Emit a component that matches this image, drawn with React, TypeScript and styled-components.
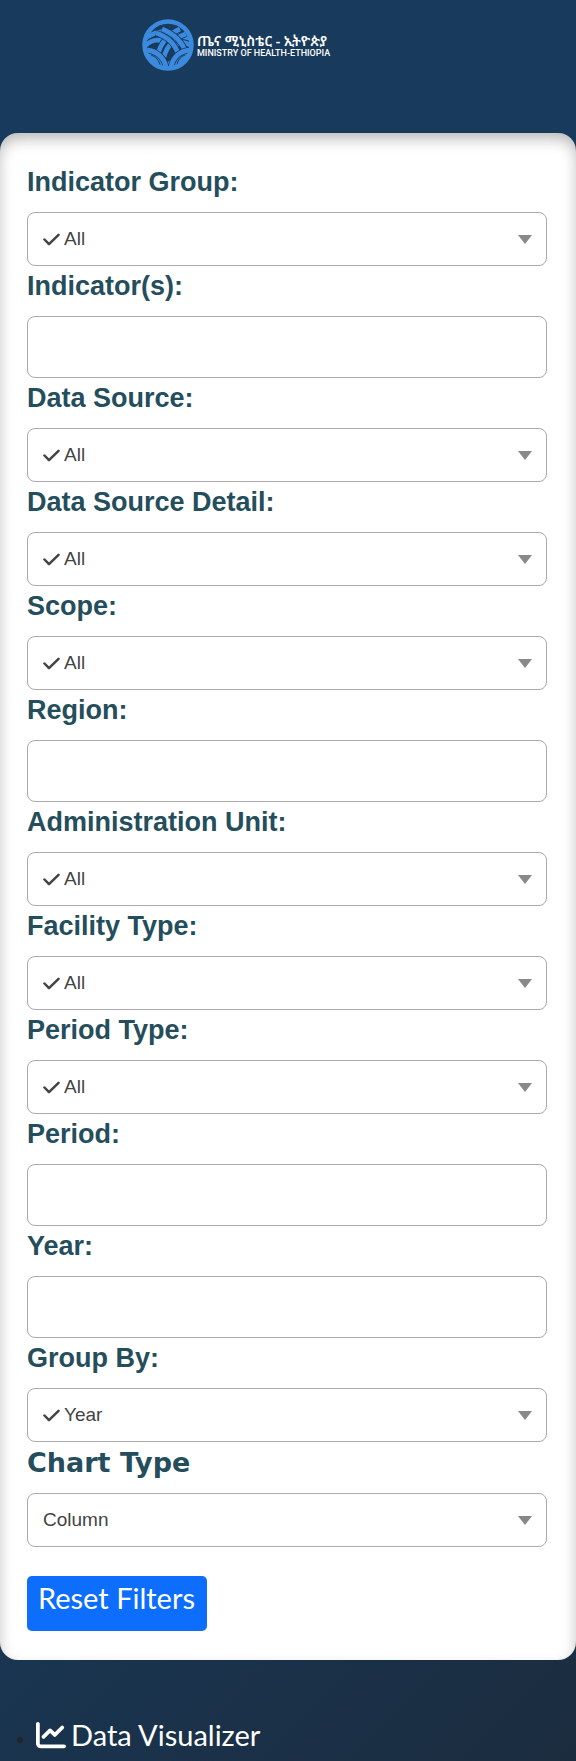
import React, { useId } from 'react';
import styled, { createGlobalStyle, css } from 'styled-components';
import { FaChartLine } from 'react-icons/fa6';

const GlobalStyle = createGlobalStyle`
  *, *::before, *::after { box-sizing: border-box; }
  body {
    margin: 0;
    min-height: 100vh;
    background: linear-gradient(135deg, #183a5c 0%, #183a5b 55%, #1b2c3e 100%);
    font-family: Lato, "Liberation Sans", sans-serif;
  }
`;

const Header = styled.header`
  display: flex;
  height: 133px;
  padding: 19px 0 0 142px;
  align-items: flex-start;
`;

const Brand = styled.a`
  display: flex;
  align-items: center;
  gap: 3px;
  color: #fff;
  text-decoration: none;
`;

const Emblem = styled.svg`
  width: 52px;
  height: 52px;
`;

const BrandText = styled.span`
  display: flex;
  flex-direction: column;
  white-space: nowrap;
`;

const BrandAmharic = styled.span`
  font: 600 14px/16px "Noto Sans Ethiopic", "Noto Sans", sans-serif;
`;

const BrandEnglish = styled.span`
  font: 500 9px/8px Roboto, "Liberation Sans", sans-serif;
`;

const Panel = styled.form`
  display: flex;
  flex-direction: column;
  align-items: stretch;
  padding: 29px 29px 29px 27px;
  background: #fff;
  border-radius: 18px;
  box-shadow: inset 0 7px 15px -2px rgba(0, 0, 0, 0.3);
`;

const Label = styled.label<{ $heavy?: boolean }>`
  display: block;
  padding-bottom: 10px;
  color: #254e5c;
  font: 700 27px/40px "Liberation Sans", Arial, sans-serif;
  ${({ $heavy }) => $heavy && css`
    padding-bottom: 9px;
    font: 900 27px/42px "Arial Black", "DejaVu Sans", sans-serif;
  `}
`;

const box = css`
  width: 100%;
  border: 1px solid #aaa;
  border-radius: 8px;
  background: #fff;
  color: #444;
  font: 400 19px/24px "Liberation Sans", Arial, sans-serif;
`;

const SelectWrap = styled.div`
  display: grid;
  align-items: center;
  color: #444;
  > * { grid-area: 1 / 1; }
  > svg { pointer-events: none; }
`;

const Select = styled.select<{ $checked: boolean }>`
  ${box}
  height: 54px;
  padding: 0 40px 0 ${({ $checked }) => ($checked ? 36 : 15)}px;
  appearance: none;
`;

const Check = styled.svg`
  width: 17px;
  height: 13px;
  margin-left: 16px;
  fill: none;
  stroke: currentColor;
  stroke-width: 2.5;
  stroke-linecap: round;
  stroke-linejoin: round;
`;

const Arrow = styled.svg`
  width: 14px;
  height: 9px;
  margin-right: 15px;
  justify-self: end;
  fill: #888;
`;

const TextBox = styled.input`
  ${box}
  display: block;
  height: 62px;
  padding: 0 16px;
`;

const ResetButton = styled.button`
  align-self: flex-start;
  height: 55px;
  margin-top: 29px;
  padding: 0 12px 11px 11px;
  border: 0;
  border-radius: 5px;
  background: #0d6efd;
  color: #fff;
  font: 400 29px/44px Lato, sans-serif;
`;

const Views = styled.ul`
  margin: 0;
  padding: 53px 0 0 36px;
  color: #212529;
  font-size: 19px;
  line-height: 44px;
`;

const ViewLink = styled.a`
  color: #fff;
  font-size: 29px;
  text-decoration: none;
  > svg { width: 30px; height: 30px; margin-right: 5px; vertical-align: -4px; }
`;

type FieldSpec = { label: string; value?: string; checked?: boolean; heavy?: boolean };

const fields: FieldSpec[] = [
  { label: 'Indicator Group:', value: 'All', checked: true },
  { label: 'Indicator(s):' },
  { label: 'Data Source:', value: 'All', checked: true },
  { label: 'Data Source Detail:', value: 'All', checked: true },
  { label: 'Scope:', value: 'All', checked: true },
  { label: 'Region:' },
  { label: 'Administration Unit:', value: 'All', checked: true },
  { label: 'Facility Type:', value: 'All', checked: true },
  { label: 'Period Type:', value: 'All', checked: true },
  { label: 'Period:' },
  { label: 'Year:' },
  { label: 'Group By:', value: 'Year', checked: true },
  { label: 'Chart Type', value: 'Column', heavy: true },
];

function Field({ label, value, checked = false, heavy }: FieldSpec) {
  const id = useId();
  return (
    <div>
      <Label htmlFor={id} $heavy={heavy}>{label}</Label>
      {value ? (
        <SelectWrap>
          <Select id={id} $checked={checked} defaultValue={value}>
            <option>{value}</option>
          </Select>
          {checked && <Check viewBox="0 0 17 13" aria-hidden><path d="M1.5 6.5l4.5 4.7L15.5 1.8" /></Check>}
          <Arrow viewBox="0 0 14 9" aria-hidden><path d="M0 0h14L7 9z" /></Arrow>
        </SelectWrap>
      ) : (
        <TextBox id={id} type="text" />
      )}
    </div>
  );
}

const bands = [
  'M4 19C14 12 24 11 34 15S44 20 49 20',
  'M3 27C9 21 14 20 20 22',
  'M34 26C39 22 44 23 50 27',
  'M38 10C28 14 18 24 16 36',
  'M44 15C34 18 25 26 22 38',
  'M14 14C24 17 33 24 37 37',
  'M20 10C32 15 40 22 44 34',
  'M5 31C14 32 22 38 24 48',
  'M48 31C38 32 31 38 29 48',
];

function Logo() {
  return (
    <Emblem viewBox="0 0 52 52" aria-hidden>
      <circle cx="26" cy="26" r="23.5" fill="#183a5b" />
      <path d="M4 32C14 33 20 37 26 43C32 37 38 33 48 32C46 43 37 50 26 50S6 43 4 32z" fill="#3b8ade" />
      <g fill="none">
        {bands.map((d) => (
          <g key={d}>
            <path d={d} stroke="#183a5b" strokeWidth="6.4" />
            <path d={d} stroke="#3b8ade" strokeWidth="4.8" />
          </g>
        ))}
        <path d="M9 36c5 2 8 5 9 10M43 36c-5 2-7 5-8 10" stroke="#183a5b" strokeWidth="1" />
        <circle cx="26" cy="26" r="23.5" stroke="#3b8ade" strokeWidth="4.5" />
      </g>
    </Emblem>
  );
}

export default function App() {
  return (
    <>
      <GlobalStyle />
      <Header>
        <Brand href="#">
          <Logo />
          <BrandText>
            <BrandAmharic lang="am">ጤና ሚኒስቴር - ኢትዮጵያ</BrandAmharic>
            <BrandEnglish>MINISTRY OF HEALTH-ETHIOPIA</BrandEnglish>
          </BrandText>
        </Brand>
      </Header>
      <main>
        <Panel onSubmit={(e) => e.preventDefault()}>
          {fields.map((f) => <Field key={f.label} {...f} />)}
          <ResetButton type="reset">Reset Filters</ResetButton>
        </Panel>
        <Views>
          <li><ViewLink href="#"><FaChartLine aria-hidden />Data Visualizer</ViewLink></li>
        </Views>
      </main>
    </>
  );
}
